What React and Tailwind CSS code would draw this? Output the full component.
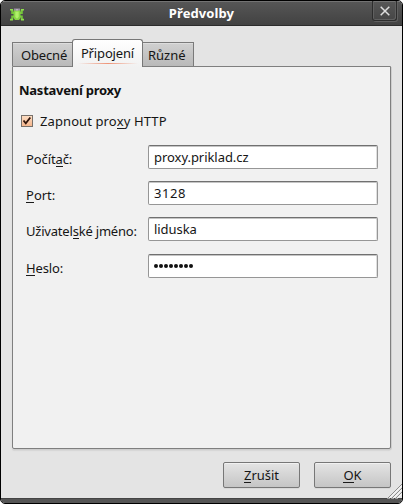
const fields = [
  { before: "Počít", key: "a", after: "č:", value: "proxy.priklad.cz", gap: "mt-0", track: "tracking-[-0.1px]", vtrack: "tracking-[-0.05px]" },
  { before: "", key: "P", after: "ort:", value: "3128", gap: "mt-[12px]", track: "tracking-[0px]", vtrack: "tracking-[0.6px]" },
  { before: "Uživatel", key: "s", after: "ké jméno:", value: "liduska", gap: "mt-[12px]", track: "tracking-[-0.2px]", vtrack: "tracking-[-0.05px]" },
  { before: "", key: "H", after: "eslo:", value: "password", secret: true, gap: "mt-[13px]", track: "tracking-[-0.15px]", vtrack: "" },
];

function Key({ children }) {
  return <span className="inline-block h-[16px] border-b border-[#1a1a1a] leading-[17px]">{children}</span>;
}

function FrogIcon() {
  return (
    <svg width="16" height="14" viewBox="0 0 16 14" className="ml-[8px] mt-[6px] shrink-0">
      <g fill="none" stroke="#74c43a" strokeWidth="2">
        <path d="M5.5 5H3.2V1.5M10.5 5h2.3V1.5M5.5 8.5H3.2V12M10.5 8.5h2.3V12" />
      </g>
      <path d="M1 1h3v1.6H1zM12 1h3v1.6h-3zM1 10.8h3v1.7H1zM12 10.8h3v1.7h-3z" fill="#8ddf4c" />
      <path d="M4.5 3L6 1h4l1.5 2v7L10 12H6l-1.5-2z" fill="#86d544" />
      <path d="M6.3 3.5h3.4V9L8 10.8 6.3 9z" fill="#b0f06a" />
      <path d="M5 .5h6v2H5z" fill="#9a8fa3" />
      <path d="M7 1h2v1.5H7z" fill="#b8b0bd" />
    </svg>
  );
}

function Button({ children }) {
  return (
    <button className="flex h-[26px] w-[77px] items-center justify-center rounded-[2px] border border-[#777] bg-gradient-to-b from-[#e4e4e4] to-[#c5c5c5] shadow-[inset_0_1px_0_#f1f1f1,0_1px_0_#d8d8d8]">
      {children}
    </button>
  );
}

export default function App() {
  return (
    <div className="h-[504px] w-[403px] overflow-hidden bg-white">
      <div className="relative flex h-[504px] w-[403px] flex-col overflow-hidden rounded-[5px] border border-black bg-[#e4e4e4] font-['Noto_Sans','Open_Sans',sans-serif] text-[13px] leading-[18px] text-[#151515]">
        <header className="flex h-[25px] shrink-0 border-b border-t border-b-[#2b2b2b] border-t-[#737373] bg-gradient-to-b from-[#565656] to-[#424242]">
          <FrogIcon />
          <h1 className="w-[353px] text-center text-[13px] font-bold leading-[22px] tracking-[0.1px] text-white">Předvolby</h1>
          <div className="-mt-px ml-[-6px] flex h-[20px] w-[25px] shrink-0 items-center justify-center rounded-b-[3px] border border-t-0 border-[#2d2d2d] shadow-[inset_1px_0_0_#606060,inset_-1px_-1px_0_#606060,1px_1px_0_#606060]">
            <svg width="10" height="10" viewBox="0 0 10 10"><path d="M.7.7l8.6 8.6M9.3.7L.7 9.3" stroke="#dedede" strokeWidth="1.5" /></svg>
          </div>
        </header>
        <main className="flex h-[472px] shrink-0 flex-col pl-[11px] pr-[11px] pt-[13px]">
          <nav className="z-10 flex h-[28px] items-end">
            <div className="mb-px h-[24px] w-[60px] border border-b-0 border-r-0 border-[#7a7a7a] bg-gradient-to-b from-[#d0d0d0] to-[#b9b9b9] pl-[8px] pt-[3px] shadow-[inset_0_1px_0_#ddd]"><span className="tracking-[-0.15px]">Obecné</span></div>
            <div className="flex h-[28px] w-[71px] flex-col items-center rounded-t-[3px] border border-b-0 border-[#777] bg-gradient-to-b from-white to-[#f1f1f1] pt-[4px]">
              <span className="whitespace-nowrap tracking-[-0.15px]">Připojení</span>
              <div className="mt-px h-px w-[60px] bg-gradient-to-r from-transparent via-[#ee9478] to-transparent" />
            </div>
            <div className="mb-px h-[24px] w-[51px] border border-b-0 border-l-0 border-[#7a7a7a] bg-gradient-to-b from-[#d0d0d0] to-[#b9b9b9] pl-[5px] pt-[3px] shadow-[inset_0_1px_0_#ddd]">Různé</div>
          </nav>
          <section className="-mt-px h-[383px] w-[379px] shrink-0 rounded-b-[2px] border border-[#7f7f7f] bg-[#f1f1f1] pl-[7px] pt-[14px] shadow-[1px_1px_0_#cecece,0_2px_1px_#d5d5d5]">
            <h2 className="-ml-px h-[18px] font-bold leading-[18px] tracking-[-0.25px] text-[#111]">Nastavení proxy</h2>
            <label className="mt-[13px] flex h-[18px] items-center whitespace-nowrap">
              <span className="-mt-px ml-[1px] mr-[7px] flex h-[12px] w-[12px] items-center justify-center border border-[#77706a] bg-gradient-to-b from-[#fbdcc2] to-[#f5b68d]">
                <svg width="10" height="10" viewBox="0 0 10 10"><path d="M1.5 4.5L3.8 7.4 8.3 1.5" fill="none" stroke="#2f140b" strokeWidth="1.8" /></svg>
              </span>
              <span className="tracking-[0.1px]">Zapnout pro<Key>x</Key>y HTTP</span>
            </label>
            <div className="mt-[15px]">
              {fields.map((f) => (
                <div key={f.value} className={"flex h-[24px] " + f.gap}>
                  <label className={"w-[128px] shrink-0 whitespace-nowrap pl-[6px] pt-[5px] " + f.track}>{f.before}<Key>{f.key}</Key>{f.after}</label>
                  <div className="flex h-[24px] w-[230px] items-center rounded-[2px] border border-[#969696] border-t-[#707070] bg-white pl-[5px] pb-px shadow-[inset_0_1px_0_#c5c5c5,inset_-1px_0_0_#dfdfdf]">
                    {f.secret ? (
                      <span className="flex gap-[1px] pt-px">
                        {Array.from(f.value).map((_, i) => <i key={i} className="h-[4px] w-[4px] rounded-full bg-[#111]" />)}
                      </span>
                    ) : <span className={f.vtrack}>{f.value}</span>}
                  </div>
                </div>
              ))}
            </div>
          </section>
          <footer className="mt-[13px] flex gap-[14px] self-end">
            <Button><span><Key>Z</Key>rušit</span></Button>
            <Button><span><Key>O</Key>K</span></Button>
          </footer>
        </main>
        <div className="h-[5px] shrink-0 border-t border-[#444] bg-[#555]" />
        <svg className="absolute bottom-[4px] right-0" width="15" height="15" viewBox="0 0 15 15">
          <g stroke="#8c8c8c"><path d="M0 15L15 0M4 15L15 4M8 15l7-7" /></g>
          <g stroke="#fff"><path d="M1.5 15L15 1.5M5.5 15L15 5.5M9.5 15L15 9.5" /></g>
        </svg>
      </div>
    </div>
  );
}
